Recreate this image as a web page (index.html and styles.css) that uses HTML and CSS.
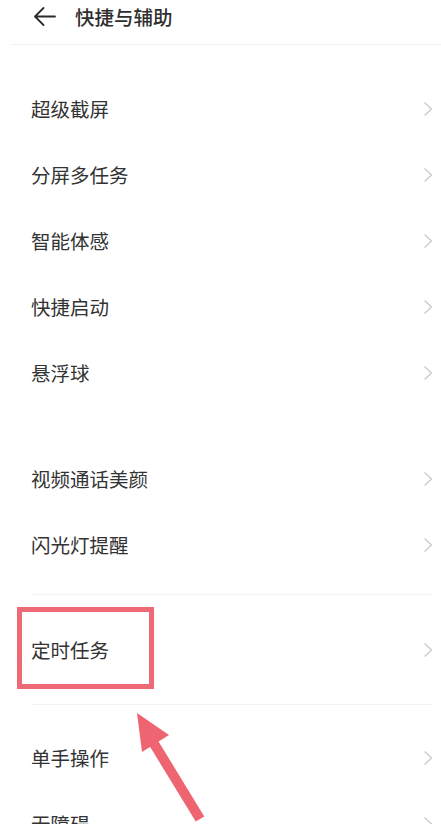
FILE: index.html
```html
<!DOCTYPE html>
<html lang="zh-CN">
<head>
<meta charset="utf-8">
<title>快捷与辅助</title>
<link rel="stylesheet" href="styles.css">
</head>
<body>
<div class="page">
  <header class="header">
    <svg class="back" width="22" height="20" viewBox="0 0 22 20"><path d="M1 9.5 H21 M9.5 1 L1 9.5 L9.5 18" fill="none" stroke="#2b2b2b" stroke-width="1.8" stroke-linecap="round" stroke-linejoin="round"/></svg>
    <h1 class="title">快捷与辅助</h1>
  </header>

  <section class="group group-first">
    <div class="row"><span class="label">超级截屏</span><svg class="chev" width="10" height="16" viewBox="0 0 10 16"><path d="M1.5 1.5 L8.5 8 L1.5 14.5" fill="none" stroke="#cccccc" stroke-width="1.4"/></svg></div>
    <div class="row"><span class="label">分屏多任务</span><svg class="chev" width="10" height="16" viewBox="0 0 10 16"><path d="M1.5 1.5 L8.5 8 L1.5 14.5" fill="none" stroke="#cccccc" stroke-width="1.4"/></svg></div>
    <div class="row"><span class="label">智能体感</span><svg class="chev" width="10" height="16" viewBox="0 0 10 16"><path d="M1.5 1.5 L8.5 8 L1.5 14.5" fill="none" stroke="#cccccc" stroke-width="1.4"/></svg></div>
    <div class="row"><span class="label">快捷启动</span><svg class="chev" width="10" height="16" viewBox="0 0 10 16"><path d="M1.5 1.5 L8.5 8 L1.5 14.5" fill="none" stroke="#cccccc" stroke-width="1.4"/></svg></div>
    <div class="row"><span class="label">悬浮球</span><svg class="chev" width="10" height="16" viewBox="0 0 10 16"><path d="M1.5 1.5 L8.5 8 L1.5 14.5" fill="none" stroke="#cccccc" stroke-width="1.4"/></svg></div>
  </section>

  <section class="group group-second">
    <div class="row"><span class="label">视频通话美颜</span><svg class="chev" width="10" height="16" viewBox="0 0 10 16"><path d="M1.5 1.5 L8.5 8 L1.5 14.5" fill="none" stroke="#cccccc" stroke-width="1.4"/></svg></div>
    <div class="row"><span class="label">闪光灯提醒</span><svg class="chev" width="10" height="16" viewBox="0 0 10 16"><path d="M1.5 1.5 L8.5 8 L1.5 14.5" fill="none" stroke="#cccccc" stroke-width="1.4"/></svg></div>
  </section>

  <div class="divider divider-a"></div>
  <div class="row row-timed"><span class="label">定时任务</span><svg class="chev" width="10" height="16" viewBox="0 0 10 16"><path d="M1.5 1.5 L8.5 8 L1.5 14.5" fill="none" stroke="#cccccc" stroke-width="1.4"/></svg></div>
  <div class="divider divider-b"></div>
  <div class="row row-onehand"><span class="label">单手操作</span><svg class="chev" width="10" height="16" viewBox="0 0 10 16"><path d="M1.5 1.5 L8.5 8 L1.5 14.5" fill="none" stroke="#cccccc" stroke-width="1.4"/></svg></div>
  <div class="row"><span class="label">无障碍</span><svg class="chev" width="10" height="16" viewBox="0 0 10 16"><path d="M1.5 1.5 L8.5 8 L1.5 14.5" fill="none" stroke="#cccccc" stroke-width="1.4"/></svg></div>

  <div class="highlight"></div>
  <svg class="pointer" width="100" height="134" viewBox="120 690 100 134">
    <line x1="153" y1="742" x2="200" y2="819" stroke="#ee6571" stroke-width="10"/>
    <polygon points="137,713 142,752 169,735" fill="#ee6571"/>
  </svg>
</div>
</body>
</html>
```

FILE: styles.css
```css
html, body {
  margin: 0;
  padding: 0;
  background: #ffffff;
}

body {
  font-family: "Noto Sans CJK SC", "Noto Sans", sans-serif;
  color: #333333;
  overflow: hidden;
}

.page {
  position: relative;
  width: 441px;
  height: 824px;
  overflow: hidden;
}

.header {
  display: flex;
  align-items: center;
  height: 33px;
  padding-bottom: 11px;
  margin-left: 10px;
  padding-left: 24px;
  border-bottom: 1px solid #f2f2f2;
}

.back {
  display: block;
  flex: none;
}

.title {
  margin: 0 0 0 19px;
  font-size: 19.5px;
  font-weight: 500;
  color: #2f2f2f;
  line-height: 1;
}

.group-first {
  margin-top: 31px;
}

.group-second {
  margin-top: 40px;
}

.row {
  display: flex;
  align-items: center;
  justify-content: space-between;
  height: 66px;
  padding: 0 8px 0 31px;
}

.label {
  font-size: 19.5px;
  line-height: 1;
  color: #333333;
}

.chev {
  display: block;
  flex: none;
}

.divider {
  height: 1px;
  background: #f3f3f3;
  margin-left: 31px;
  margin-right: 8px;
}

.divider-a {
  margin-top: 16px;
}

.row-timed {
  margin-top: 22px;
}

.divider-b {
  margin-top: 21px;
}

.row-onehand {
  margin-top: 20px;
}

.highlight {
  position: absolute;
  left: 17px;
  top: 607px;
  width: 127px;
  height: 72px;
  border: 5px solid #ee6a76;
}

.pointer {
  position: absolute;
  left: 120px;
  top: 690px;
}
```
